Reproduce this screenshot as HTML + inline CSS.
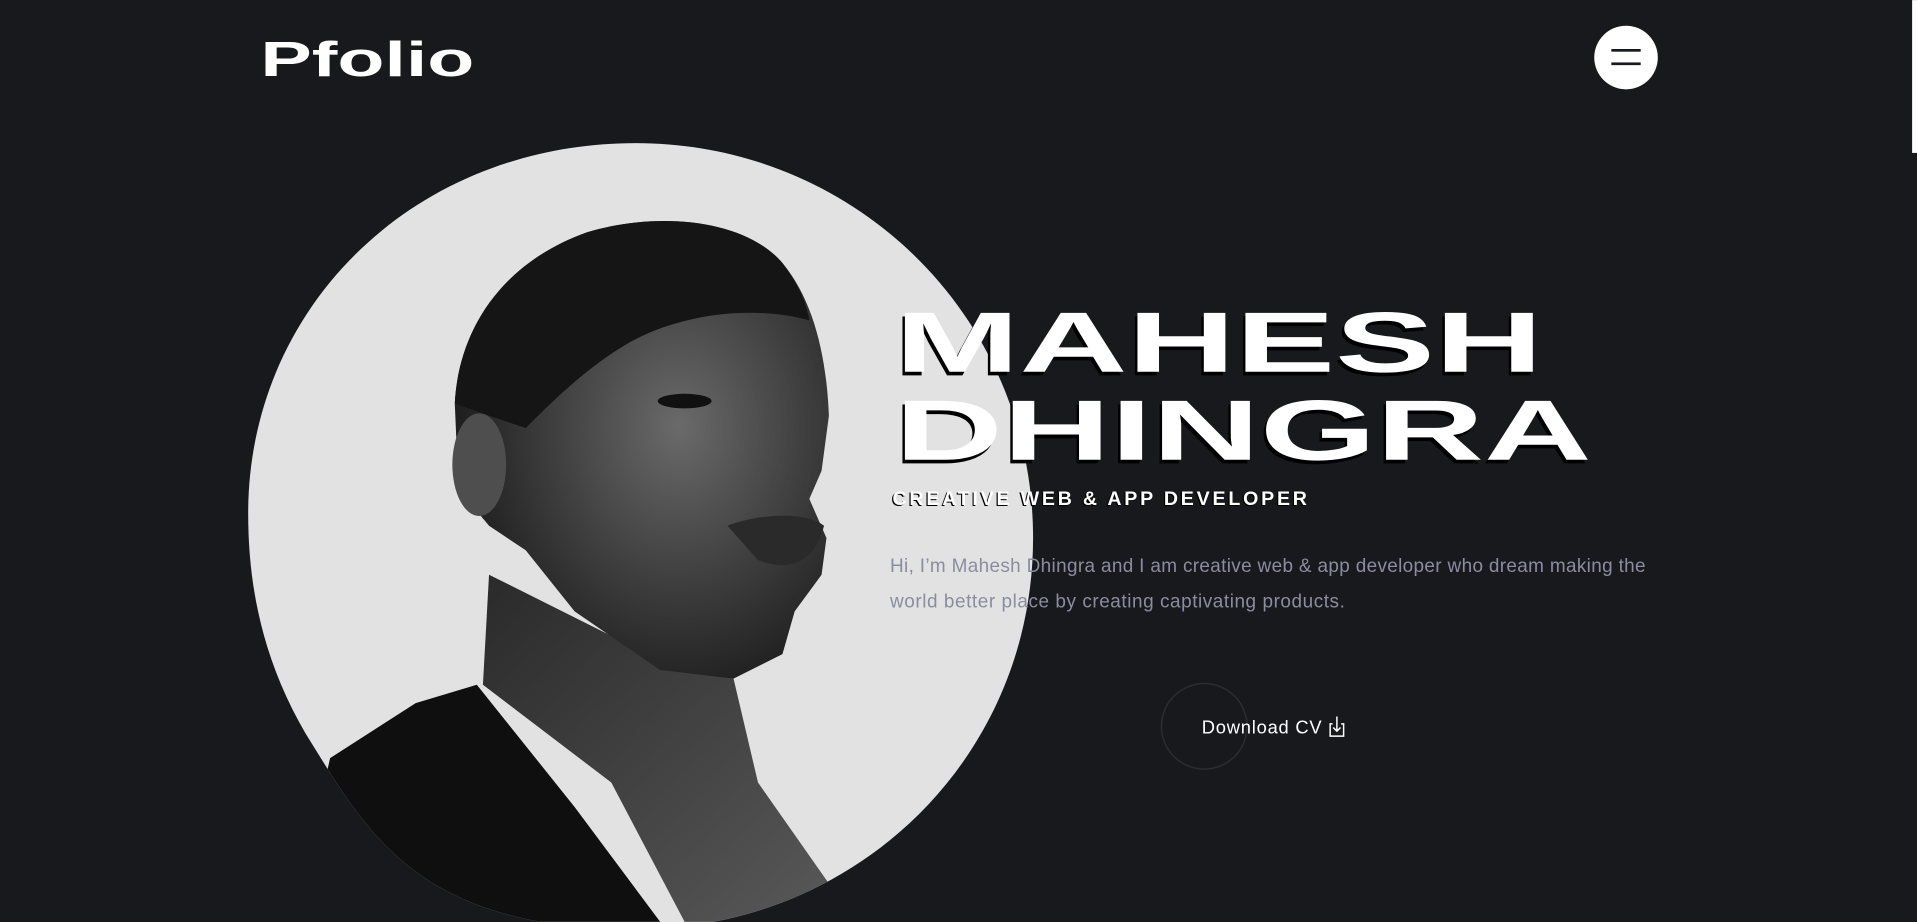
<!DOCTYPE html>
<html><head><meta charset="utf-8"><style>
html,body{margin:0;padding:0;background:#18191d;overflow:hidden}
svg{display:block}
</style></head><body>
<svg width="1917" height="922" viewBox="0 0 1568 754" xmlns="http://www.w3.org/2000/svg">
<defs>
<clipPath id="c"><path d="M520,117 C700,117 845,260 845,440 C845,620 700,760 520,760 C340,760 300,680 250,600 C215,540 203,480 203,420 C203,250 340,117 520,117Z"/></clipPath>
<radialGradient id="sk" cx="0.6" cy="0.45" r="0.6"><stop offset="0" stop-color="#6a6a6a"/><stop offset="0.6" stop-color="#3c3c3c"/><stop offset="1" stop-color="#1e1e1e"/></radialGradient>
<linearGradient id="nk" x1="0" y1="0" x2="1" y2="1"><stop offset="0" stop-color="#2a2a2a"/><stop offset="1" stop-color="#5a5a5a"/></linearGradient>
</defs>
<rect width="1568" height="754" fill="#18191d"/>
<rect x="1564" y="0" width="4" height="125" fill="#fff"/>
<text x="213" y="62" font-family="Liberation Sans, sans-serif" font-weight="bold" font-size="40" fill="#fff" textLength="175" lengthAdjust="spacingAndGlyphs">Pfolio</text>
<circle cx="1330" cy="47" r="26" fill="#fff"/>
<rect x="1318" y="40" width="24" height="2.2" fill="#18191d"/>
<rect x="1318" y="51" width="24" height="2.2" fill="#18191d"/>
<path d="M520,117 C700,117 845,260 845,440 C845,620 700,760 520,760 C340,760 300,680 250,600 C215,540 203,480 203,420 C203,250 340,117 520,117Z" fill="#e2e2e2"/>
<g clip-path="url(#c)">
<path d="M400,470 L395,560 L500,640 L560,754 L700,754 L620,640 L600,555 L540,540 Z" fill="url(#nk)"/>
<path d="M372,330 C375,270 410,215 480,190 C540,172 610,180 640,215 C665,245 676,290 678,340 L672,385 L662,408 L676,440 L672,470 L650,500 L640,535 L600,555 L540,548 L470,500 L430,450 L400,430 L375,400 Z" fill="url(#sk)"/>
<path d="M372,330 C375,270 410,215 480,190 C540,172 610,180 640,215 C655,235 660,250 662,262 C620,250 560,255 515,280 C480,300 450,330 430,350 L400,340 Z" fill="#151515"/>
<ellipse cx="392" cy="380" rx="22" ry="42" fill="#4e4e4e"/>
<path d="M270,620 L340,575 L390,560 L470,660 L540,754 L240,754 Z" fill="#0f0f0f"/>
<ellipse cx="560" cy="328" rx="22" ry="6" fill="#111"/>
<path d="M595,430 C620,420 660,418 674,430 C668,455 650,470 620,458 Z" fill="#2a2a2a"/>
</g>
<g font-family="Liberation Sans, sans-serif" font-weight="bold" font-size="70">
<text x="730" y="307" fill="#000" textLength="530" lengthAdjust="spacingAndGlyphs">MAHESH</text>
<text x="732" y="304" fill="#fff" textLength="530" lengthAdjust="spacingAndGlyphs">MAHESH</text>
<text x="730" y="379" fill="#000" textLength="570" lengthAdjust="spacingAndGlyphs">DHINGRA</text>
<text x="732" y="376" fill="#fff" textLength="570" lengthAdjust="spacingAndGlyphs">DHINGRA</text>
</g>
<text x="729" y="414" font-family="Liberation Sans, sans-serif" font-weight="bold" font-size="16" fill="#000" textLength="339">CREATIVE WEB &amp; APP DEVELOPER</text>
<text x="730" y="413" font-family="Liberation Sans, sans-serif" font-weight="bold" font-size="16" fill="#fff" textLength="339">CREATIVE WEB &amp; APP DEVELOPER</text>
<g font-family="Liberation Sans, sans-serif" font-size="15.5" fill="#8a8da0">
<text x="728" y="468" textLength="618">Hi, I’m Mahesh Dhingra and I am creative web &amp; app developer who dream making the</text>
<text x="728" y="497" textLength="372">world better place by creating captivating products.</text>
</g>
<circle cx="985" cy="594" r="35" fill="none" stroke="#2c2d32" stroke-width="1.2"/>
<text x="983" y="600" font-family="Liberation Sans, sans-serif" font-size="15" fill="#fff" textLength="98">Download CV</text>
<g fill="none" stroke="#fff" stroke-width="1.2">
<path d="M1090,592 L1088,592 L1088,602 L1099,602 L1099,592 L1097,592"/>
<path d="M1093.5,586 L1093.5,598 M1090.5,595 L1093.5,598 L1096.5,595"/>
</g>
</svg>
</body></html>
